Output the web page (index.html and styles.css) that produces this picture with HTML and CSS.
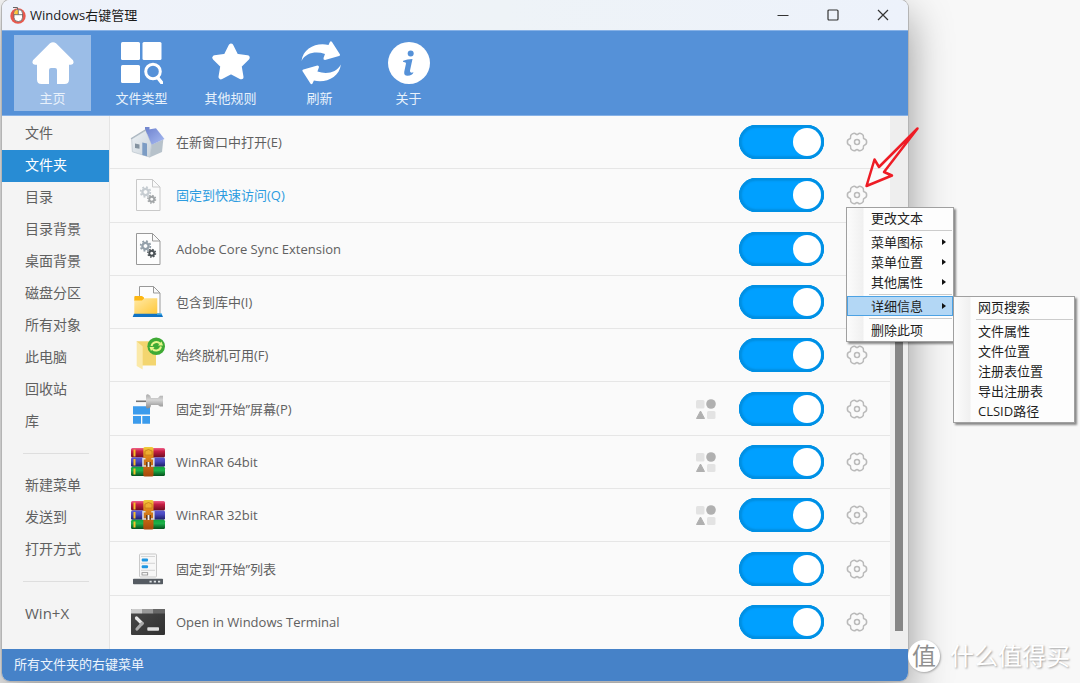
FILE: index.html
```html
<!DOCTYPE html>
<html lang="zh-CN">
<head>
<meta charset="utf-8">
<meta name="viewport" content="width=device-width, initial-scale=1">
<title>Windows右键管理</title>
<link rel="stylesheet" href="styles.css">
</head>
<body>
<svg class="sprite" aria-hidden="true">
  <defs>
    <linearGradient id="roof" x1="0" y1="0" x2="1" y2="1"><stop offset="0" stop-color="#6f83cf"/><stop offset="1" stop-color="#a9bcf2"/></linearGradient>
    <linearGradient id="wall" x1="0" y1="0" x2="1" y2="1"><stop offset="0" stop-color="#eef2f5"/><stop offset="1" stop-color="#c9d2da"/></linearGradient>
    <linearGradient id="folder" x1="0" y1="0" x2="1" y2="1"><stop offset="0" stop-color="#ffe9a6"/><stop offset="1" stop-color="#ffc83a"/></linearGradient>
    <linearGradient id="red" x1="0" y1="0" x2="0" y2="1"><stop offset="0" stop-color="#f0608a"/><stop offset=".35" stop-color="#c61f44"/><stop offset="1" stop-color="#6d0c20"/></linearGradient>
    <linearGradient id="purple" x1="0" y1="0" x2="0" y2="1"><stop offset="0" stop-color="#5a5ad0"/><stop offset=".4" stop-color="#4a4ac0"/><stop offset="1" stop-color="#1d1d66"/></linearGradient>
    <linearGradient id="green" x1="0" y1="0" x2="0" y2="1"><stop offset="0" stop-color="#12a53c"/><stop offset=".4" stop-color="#1db14a"/><stop offset="1" stop-color="#064f1c"/></linearGradient>
    <linearGradient id="strap" x1="0" y1="0" x2="0" y2="1"><stop offset="0" stop-color="#f0cf3c"/><stop offset=".3" stop-color="#e08a1c"/><stop offset="1" stop-color="#a8480c"/></linearGradient>
    <linearGradient id="metal" x1="0" y1="0" x2="0" y2="1"><stop offset="0" stop-color="#aaa"/><stop offset=".4" stop-color="#d6d6d6"/><stop offset="1" stop-color="#8a8a8a"/></linearGradient>
    <linearGradient id="console" x1="0" y1="0" x2="1" y2="1"><stop offset="0" stop-color="#4a4a4a"/><stop offset="1" stop-color="#303030"/></linearGradient>
  </defs>
  <symbol id="gear" viewBox="-12 -12 24 24">
    <path d="M10.500 0Q10.500 2.700 8.400 3.200Q6.600 3.800 7 5.700Q7.500 7.500 5.100 8.900Q2.700 10.200 1.400 8.900Q0 7.600-1.400 8.900Q-2.700 10.200-5.100 8.900Q-7.500 7.500-7 5.700Q-6.600 3.800-8.400 3.200Q-10.500 2.700-10.500 0Q-10.500-2.700-8.400-3.200Q-6.600-3.800-7-5.700Q-7.500-7.500-5.100-8.900Q-2.700-10.200-1.400-8.900Q0-7.600 1.400-8.900Q2.700-10.200 5.100-8.900Q7.500-7.500 7-5.700Q6.600-3.800 8.400-3.200Q10.500-2.700 10.500 0Z"/>
    <circle r="2.700"/>
  </symbol>
  <symbol id="group" viewBox="0 0 20 20">
    <rect x="0" y="1" width="8.500" height="8.500" rx="1.500" fill="#e3e3e3"/>
    <circle cx="15" cy="5" r="4.800" fill="#b0b0b0"/>
    <path d="M4.500 12 8.500 19.500H.5Z" fill="#b0b0b0" stroke="#b0b0b0" stroke-linejoin="round"/>
    <rect x="11" y="12" width="8.500" height="8" rx="1.500" fill="#e3e3e3"/>
  </symbol>
  <symbol id="cog" viewBox="-6 -6 12 12">
    <circle r="3.100" fill="none" stroke="currentColor" stroke-width="2.400"/>
    <circle r="4.900" fill="none" stroke="currentColor" stroke-width="1.800" stroke-dasharray="1.920 1.920"/>
  </symbol>
  <symbol id="doc" viewBox="0 0 36 36">
    <path d="M6.500 2.500H22.500L30 10V33.500H6.500ZM22.500 2.500V10H30" fill="#fdfdfd" stroke="currentColor"/>
  </symbol>
  <symbol id="winrar" viewBox="0 0 36 36">
    <rect x="1" y="4" width="34" height="9.500" rx="1.500" fill="url(#red)"/>
    <rect x="1" y="13.500" width="34" height="9.200" rx="1.500" fill="url(#purple)"/>
    <rect x="1" y="22.700" width="34" height="9.300" rx="1.500" fill="url(#green)"/>
    <path d="M3.500 5.500h2v7h-2zM3.500 15h2v6.500h-2zM3.500 24.500h2v6h-2z" fill="#f5c02a"/>
    <rect x="13.300" y="3" width="10.200" height="29.500" rx="1.500" fill="url(#strap)"/>
    <path d="M15 7q3.500-3 7 0v4h-7z" stroke="#c07a18" fill="#efae30" stroke-width=".7"/>
    <path d="M15.500 14.700H13V22H16M21 22H23.800V14.700H21.300" fill="none" stroke="#dcdcdc" stroke-width="1.600"/>
    <path d="M16.200 22.500v-4.500h4.600v4.500z" fill="#54301a"/>
    <path d="M18.500 18v5" stroke="#f2f2f2" stroke-width="1.800"/>
  </symbol>
</svg>

<div class="desktop">
<main class="window">
  <header class="titlebar">
    <svg class="app-icon" viewBox="0 0 16 18" aria-hidden="true">
      <circle cx="8" cy="10" r="7.700" fill="#e8584c"/>
      <path d="M3 1.500h4.500V4" stroke="#666" fill="none"/>
      <rect x="4" y="3.500" width="8.500" height="12" rx="4" fill="#fff" stroke="#666" stroke-width=".8"/>
      <path d="M4.400 8.500V7q0-3 3.600-3v4.500z" fill="#ffc83a"/>
      <path d="M8.300 4v4.500M4 8.700H12.500" stroke="#555" stroke-width=".8" fill="none"/>
    </svg>
    <h1 class="title">Windows右键管理</h1>
    <div class="window-buttons">
      <button class="window-button" aria-label="最小化"><svg viewBox="0 0 12 12"><path d="M.5 6.500h11"/></svg></button>
      <button class="window-button" aria-label="最大化"><svg viewBox="0 0 12 12"><rect x="1" y="1" width="10" height="10" rx="1"/></svg></button>
      <button class="window-button" aria-label="关闭"><svg viewBox="0 0 12 12"><path d="M1 1l10 10M11 1L1 11"/></svg></button>
    </div>
  </header>

  <nav class="toolbar" aria-label="工具栏">
    <button class="tool tool-active">
      <svg viewBox="0 0 42 42"><path d="M18 1.300Q21-1 24 1.300L41 18.200Q42.800 22.500 39 22.700H37V37.500Q37 42 32.500 42H25V28Q25 26 23 26H19Q17 26 17 28V42H9.500Q5 42 5 37.500V22.700H3Q-.8 22.500 1 18.200Z"/></svg>
      <span>主页</span>
    </button>
    <button class="tool">
      <svg viewBox="0 0 42 42"><rect width="19" height="18" rx="1.500"/><rect x="21.500" width="19" height="18" rx="1.500"/><rect y="23" width="19" height="18" rx="1.500"/><circle cx="32" cy="29.500" r="7.300" fill="none" stroke="#fff" stroke-width="3"/><path d="M37 36l4 5" stroke="#fff" stroke-width="3.500" stroke-linecap="round"/></svg>
      <span>文件类型</span>
    </button>
    <button class="tool">
      <svg viewBox="0 0 42 42"><path d="M21 4 26 14.100 37.200 15.700 29.100 23.600 31 34.800 21 29.500 11 34.800 12.900 23.600 4.800 15.700 16 14.100Z" stroke="#fff" stroke-width="5" stroke-linejoin="round"/></svg>
      <span>其他规则</span>
    </button>
    <button class="tool">
      <svg viewBox="0 0 42 42" overflow="visible"><path id="sweep" d="M2.500 19C4 6 18 0 29.500 3L31-.2Q32-1.200 33 0L41 12.500Q41.300 13.700 40 14L26 18Q24 18 24.500 16L26 12C17 9 7 10.500 2.500 19Z"/><use href="#sweep" transform="rotate(180 22.200 20.800)"/></svg>
      <span>刷新</span>
    </button>
    <button class="tool">
      <svg viewBox="0 0 42 42"><circle cx="21" cy="21" r="21"/><g fill="#5591d8"><circle cx="22.700" cy="11.500" r="3"/><path d="M15.200 18.800Q19 17 24.500 17L22 28.500Q21.500 31.500 25.500 30.300Q24.500 33.700 19.500 33.700Q15.500 33.700 16.300 29.500L18 21.500Q18.300 19.800 15 20Z"/></g></svg>
      <span>关于</span>
    </button>
  </nav>

  <div class="content">
    <nav class="sidebar" aria-label="场景">
      <a class="side-link" href="#">文件</a>
      <a class="side-link side-link-active" href="#" aria-current="page">文件夹</a>
      <a class="side-link" href="#">目录</a>
      <a class="side-link" href="#">目录背景</a>
      <a class="side-link" href="#">桌面背景</a>
      <a class="side-link" href="#">磁盘分区</a>
      <a class="side-link" href="#">所有对象</a>
      <a class="side-link" href="#">此电脑</a>
      <a class="side-link" href="#">回收站</a>
      <a class="side-link" href="#">库</a>
      <hr class="side-rule">
      <a class="side-link" href="#">新建菜单</a>
      <a class="side-link" href="#">发送到</a>
      <a class="side-link" href="#">打开方式</a>
      <hr class="side-rule">
      <a class="side-link side-link-latin" href="#">Win+X</a>
    </nav>

    <ul class="list">
      <li class="row">
        <svg class="row-icon" viewBox="0 0 36 36"><rect x="15" y="3" width="4.500" height="7" fill="#7488cf"/><path d="M15.700 6.500 1.700 15 2.300 27.800 20 33.200 21.700 20.500Z" fill="url(#wall)" stroke="#b9c3cb" stroke-width=".7"/><path d="M21.700 20.500 33.300 15.500 32 28 20 33.200Z" fill="#b7c2cb"/><path d="M15.700 6 26 4.300 34.500 15 21.700 20.700Z" fill="url(#roof)"/><path d="M1 14.700 15.700 5.800" stroke="#aab6c0" stroke-width="1.200"/><path d="M12.300 18.500l4.700 1v12.800l-4.700-1.400z" fill="#7c9cc4"/><path d="M5 19.500l4.500 1v4.300l-4.500-.8z" fill="#8593a0"/></svg>
        <label class="row-label" for="item1">在新窗口中打开(E)</label>
        <input class="switch" id="item1" type="checkbox" role="switch" checked>
        <button class="gear" aria-label="设置"><svg><use href="#gear"/></svg></button>
      </li>
      <li class="row">
        <svg class="row-icon faded" viewBox="0 0 36 36"><use href="#doc" color="#999"/><use href="#cog" x="9.500" y="9" width="12" height="12" color="#94a0aa"/><use href="#cog" x="17" y="17.500" width="9.500" height="9.500" color="#4b5256"/></svg>
        <label class="row-label row-label-active" for="item2">固定到快速访问(Q)</label>
        <input class="switch" id="item2" type="checkbox" role="switch" checked>
        <button class="gear" aria-label="设置" aria-expanded="true"><svg><use href="#gear"/></svg></button>
      </li>
      <li class="row">
        <svg class="row-icon" viewBox="0 0 36 36"><use href="#doc" color="#999"/><use href="#cog" x="9.500" y="9" width="12" height="12" color="#94a0aa"/><use href="#cog" x="17" y="17.500" width="9.500" height="9.500" color="#4b5256"/></svg>
        <label class="row-label" for="item3">Adobe Core Sync Extension</label>
        <input class="switch" id="item3" type="checkbox" role="switch" checked>
        <button class="gear" aria-label="设置"><svg><use href="#gear"/></svg></button>
      </li>
      <li class="row">
        <svg class="row-icon" viewBox="0 0 36 36"><path d="M9.500 2.500H23.500L30 9V30H9.500ZM23.500 2.500V9H30" fill="#fdfdfd" stroke="#999"/><path d="M4.300 13Q4.300 12 5.300 12H12L14 13.500V17H4.300Z" fill="#fdb713"/><path d="M4.300 16.500H12L14.300 14.300H27.300V30H4.300Z" fill="url(#folder)"/><path d="M4 29.800H31.500L33 33H2.700Z" fill="#1173c4"/><path d="M27 29.500h4.700l.5 1.300H27z" fill="#3bb3f0"/></svg>
        <label class="row-label" for="item4">包含到库中(I)</label>
        <input class="switch" id="item4" type="checkbox" role="switch" checked>
        <button class="gear" aria-label="设置"><svg><use href="#gear"/></svg></button>
      </li>
      <li class="row">
        <svg class="row-icon" viewBox="0 0 36 36"><path d="M6.700 4.200H26V28.500H12Z" fill="#f3d56f"/><path d="M6.700 4.200 12.700 9.500V32.500L6.700 29Z" fill="#fbe9a8"/><circle cx="26.200" cy="9.200" r="8.800" fill="#3faa35"/><path d="M21.500 9A5 5 0 0 1 30 6.500M31 9.500A5 5 0 0 1 22.500 12" stroke="#e8f58a" stroke-width="2" fill="none"/><path d="M28 8.500h5l-1.500-4zM24.500 10h-5l1.500 4z" fill="#e8f58a"/></svg>
        <label class="row-label" for="item5">始终脱机可用(F)</label>
        <input class="switch" id="item5" type="checkbox" role="switch" checked>
        <button class="gear" aria-label="设置"><svg><use href="#gear"/></svg></button>
      </li>
      <li class="row">
        <svg class="row-icon" viewBox="0 0 36 36"><path d="M3 15.300H20V23.500H3ZM3 25H11V32.700H3ZM12.300 25H20V32.700H12.300Z" fill="#3b9bec"/><path d="M6 10.300H17" stroke="#777" stroke-width="1.600"/><path d="M16 5Q16 3 18 3.300Q21 4.500 21 7H28L30 4.700H33V15.500H30L28 14H21Q21 17 18 17.500Q16 17.500 16 16Z" fill="url(#metal)"/></svg>
        <label class="row-label" for="item6">固定到“开始”屏幕(P)</label>
        <svg class="group-icon" role="img" aria-label="多项"><use href="#group"/></svg>
        <input class="switch" id="item6" type="checkbox" role="switch" checked>
        <button class="gear" aria-label="设置"><svg><use href="#gear"/></svg></button>
      </li>
      <li class="row">
        <svg class="row-icon"><use href="#winrar"/></svg>
        <label class="row-label" for="item7">WinRAR 64bit</label>
        <svg class="group-icon" role="img" aria-label="多项"><use href="#group"/></svg>
        <input class="switch" id="item7" type="checkbox" role="switch" checked>
        <button class="gear" aria-label="设置"><svg><use href="#gear"/></svg></button>
      </li>
      <li class="row">
        <svg class="row-icon"><use href="#winrar"/></svg>
        <label class="row-label" for="item8">WinRAR 32bit</label>
        <svg class="group-icon" role="img" aria-label="多项"><use href="#group"/></svg>
        <input class="switch" id="item8" type="checkbox" role="switch" checked>
        <button class="gear" aria-label="设置"><svg><use href="#gear"/></svg></button>
      </li>
      <li class="row">
        <svg class="row-icon" viewBox="0 0 36 36"><rect x="9.500" y="3" width="17" height="23" rx="1" fill="#f7f7f7" stroke="#c9c9c9"/><path d="M11 5.500h14M11 12.300h14M11 19.300h14" stroke="#ccc" stroke-width=".8"/><rect x="11.700" y="7.500" width="6.300" height="3" rx="1" fill="#1f97e2"/><rect x="11.700" y="14.300" width="6.300" height="3" rx="1" fill="#1f97e2"/><rect x="12" y="21.700" width="5.700" height="2.300" fill="#fff" stroke="#888" stroke-width=".8"/><rect x="3" y="27.800" width="30" height="5.500" rx=".8" fill="#555b62"/><path d="M19.500 29.800h2.200v1.800h-2.200zM23.800 29.800h2.200v1.800h-2.200zM28 29.800h2.200v1.800h-2.200z" fill="#dfe3e6"/></svg>
        <label class="row-label" for="item9">固定到“开始”列表</label>
        <input class="switch" id="item9" type="checkbox" role="switch" checked>
        <button class="gear" aria-label="设置"><svg><use href="#gear"/></svg></button>
      </li>
      <li class="row">
        <svg class="row-icon" viewBox="0 0 36 36"><rect x="1" y="5" width="34" height="26" rx="1" fill="url(#console)"/><path d="M2 5H12V9.500H1V6Q1 5 2 5Z" fill="#ccc"/><path d="M12 5H23.500V9.500H12Z" fill="#999"/><path d="M23.500 5H34Q35 5 35 6V9.500H23.500Z" fill="#666"/><path d="M6.500 14 12 19.500" stroke="#e8e8e8" stroke-width="3.200" stroke-linecap="round"/><path d="M12 19.500 7 25" stroke="#aaa" stroke-width="3.200" stroke-linecap="round"/><rect x="17.300" y="23.300" width="11.700" height="3.500" rx=".8" fill="#e0e0e0"/></svg>
        <label class="row-label" for="item10">Open in Windows Terminal</label>
        <input class="switch" id="item10" type="checkbox" role="switch" checked>
        <button class="gear" aria-label="设置"><svg><use href="#gear"/></svg></button>
      </li>
    </ul>
    <div class="scrollbar"><div class="scroll-thumb"></div></div>
  </div>

  <footer class="statusbar">所有文件夹的右键菜单</footer>
</main>

<svg class="pointer-arrow" viewBox="0 0 58 64" aria-hidden="true"><path d="M3.500 60 11.500 33.500 16 41 54.500 2.500 21 46 29 49.500Z"/></svg>

<div class="menu main-menu" role="menu">
  <button class="menu-item" role="menuitem">更改文本</button>
  <hr class="menu-rule">
  <button class="menu-item has-sub" role="menuitem">菜单图标</button>
  <button class="menu-item has-sub" role="menuitem">菜单位置</button>
  <button class="menu-item has-sub" role="menuitem">其他属性</button>
  <hr class="menu-rule">
  <div class="menu-branch">
    <button class="menu-item has-sub menu-item-active" role="menuitem" aria-expanded="true">详细信息</button>
    <div class="menu sub-menu" role="menu">
      <button class="menu-item" role="menuitem">网页搜索</button>
      <hr class="menu-rule">
      <button class="menu-item" role="menuitem">文件属性</button>
      <button class="menu-item" role="menuitem">文件位置</button>
      <button class="menu-item" role="menuitem">注册表位置</button>
      <button class="menu-item" role="menuitem">导出注册表</button>
      <button class="menu-item" role="menuitem">CLSID路径</button>
    </div>
  </div>
  <hr class="menu-rule">
  <button class="menu-item" role="menuitem">删除此项</button>
</div>

<div class="watermark"><span class="watermark-badge">值</span><span>什么值得买</span></div>
</div>
</body>
</html>
```

FILE: styles.css
```css
* { box-sizing: border-box; }

body {
  margin: 0;
  background: #f8f8f8;
  color: #606060;
  font: 13px/20px "Open Sans", "Noto Sans CJK SC", sans-serif;
}

button {
  margin: 0;
  padding: 0;
  border: 0;
  background: none;
  color: inherit;
  font: inherit;
}

a { color: inherit; text-decoration: none; }

.sprite { position: absolute; width: 0; height: 0; }

.desktop {
  position: relative;
  display: flex;
  min-height: 100vh;
  padding: 0 172px 2px 2px;
  overflow: hidden;
}

.window {
  flex: 1;
  display: flex;
  flex-direction: column;
  border-radius: 8px;
  overflow: hidden;
  background: #fafafa;
  box-shadow: 0 0 0 1px #b4b4b4, 0 16px 44px rgba(0, 0, 0, .42);
}

.titlebar {
  display: flex;
  align-items: center;
  height: 30px;
  padding-left: 8px;
  background: linear-gradient(90deg, #eef2fb, #eef3f7 55%, #edf2fb);
  color: #1b1b1b;
}

.app-icon { width: 16px; height: 18px; margin-right: 4px; }

.title { margin: 0; font-size: 13px; font-weight: 400; }

.window-buttons { display: flex; margin-left: auto; }

.window-button {
  display: grid;
  place-items: center;
  width: 50px;
  height: 30px;
}

.window-button svg {
  width: 12px;
  height: 12px;
  fill: none;
  stroke: #333;
  stroke-width: 1.2;
}

.toolbar {
  display: flex;
  gap: 12px;
  padding: 4px 12px;
  border-top: 1px solid #86b1e6;
  border-bottom: 1px solid #86b1e6;
  background: #5591d8;
  color: #e8f1fb;
}

.tool {
  display: flex;
  flex-direction: column;
  align-items: center;
  gap: 4px;
  width: 77px;
  height: 76px;
  padding-top: 7px;
}

.tool svg { width: 42px; height: 42px; fill: #fff; }

.tool-active { background: #9bbde7; }

.content { flex: 1; display: flex; }

.sidebar {
  width: 108px;
  padding: 2px 0 18px;
  border-right: 1px solid #e4e4e4;
  background: #f4f4f4;
  font-size: 14px;
}

.side-link {
  display: block;
  height: 32px;
  padding-left: 23px;
  line-height: 30px;
}

.side-link-latin { font-size: 15px; }

.side-link-active { background: #288cd4; color: #fff; }

.side-rule {
  margin: 15px 20px 16px 21px;
  border: 0;
  border-top: 1px solid #dedede;
}

.list {
  flex: 1;
  display: flex;
  flex-direction: column;
  margin: 0;
  padding: 0;
  list-style: none;
}

.row {
  flex: 1;
  display: flex;
  align-items: center;
  min-height: 53px;
  padding: 0 22px 0 20px;
  border-bottom: 1px solid #e6e6e6;
}

.row:last-child { border-bottom-color: transparent; }

.row-icon { width: 36px; height: 36px; margin-right: 10px; }

.faded { opacity: .5; }

.row-label { flex: 1; }

.row-label-active { color: #2c9ce0; }

.group-icon { width: 20px; height: 20px; margin-right: 23px; }

.switch {
  display: flex;
  align-items: center;
  justify-content: flex-end;
  appearance: none;
  width: 85px;
  height: 34px;
  margin: 0 22px 0 0;
  padding-right: 3px;
  border-radius: 17px;
  background: #00a0ff;
  box-shadow: inset 0 0 0 2px #0090e4, inset 0 0 2px 3px #0090e4;
}

.switch::before {
  content: "";
  width: 28px;
  height: 28px;
  border-radius: 50%;
  background: #fff;
}

.switch:not(:checked) {
  justify-content: flex-start;
  padding-left: 3px;
  background: #bbb;
}

.gear { display: grid; width: 22px; height: 22px; }

.gear svg {
  width: 22px;
  height: 22px;
  fill: none;
  stroke: #bababa;
  stroke-width: 1.7;
}

.scrollbar {
  display: flex;
  width: 18px;
  padding: 100px 5px 18px;
  background: #eee;
}

.scroll-thumb { width: 8px; background: #868686; }

.statusbar {
  padding: 5px 12px 7px;
  background: #4682c8;
  color: #eef5fd;
}

.pointer-arrow {
  position: absolute;
  top: 126px;
  right: 159px;
  width: 58px;
  height: 64px;
  fill: none;
  stroke: #ee1c25;
  stroke-width: 2.5;
  stroke-linejoin: round;
}

.menu {
  position: absolute;
  padding-bottom: 1px;
  border: 1px solid #a0a0a0;
  background: linear-gradient(90deg, #fcfcfc, #f0f0f0 16px, #fdfdfd 17px);
  box-shadow: 2px 2px 2px rgba(0, 0, 0, .45);
  color: #1e1e1e;
}

.main-menu { top: 207px; right: 126px; width: 108px; }

.sub-menu { top: 0; left: 106px; width: 122px; }

.menu-branch { position: relative; }

.menu-item {
  display: flex;
  align-items: center;
  width: 100%;
  height: 20px;
  padding: 0 7px 0 24px;
}

.has-sub::after {
  content: "";
  margin-left: auto;
  border: 3px solid transparent;
  border-left: 4px solid #111;
  border-right: 0;
}

.menu-item-active {
  background: #b3d7f5;
  box-shadow: inset 0 0 0 1px #4ca2e4;
}

.menu-rule {
  margin: 2px 1px 1px 22px;
  border: 0;
  border-top: 1px solid #ccc;
}

.watermark {
  position: absolute;
  right: 10px;
  bottom: 11px;
  display: flex;
  align-items: center;
  gap: 10px;
  color: #fff;
  font-size: 24px;
  line-height: 32px;
  text-shadow: 1px 1px 2px #a0a0a0;
}

.watermark-badge {
  width: 32px;
  height: 32px;
  border-radius: 50%;
  background: #fff;
  box-shadow: 1px 1px 2px #aaa;
  color: #909090;
  text-align: center;
  text-shadow: none;
}
```
